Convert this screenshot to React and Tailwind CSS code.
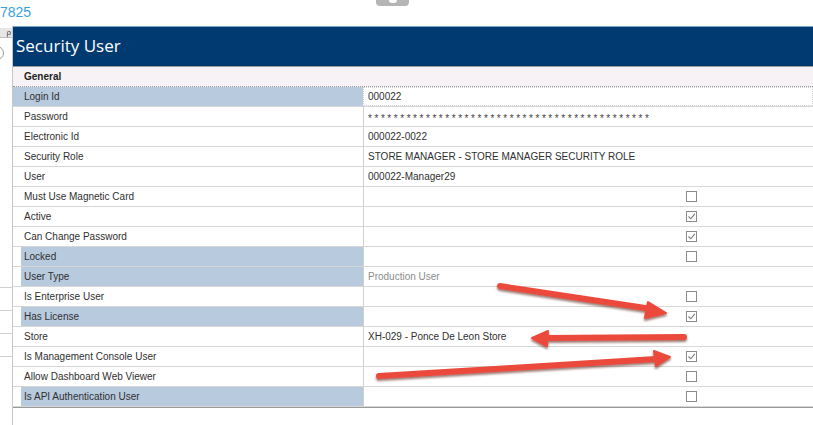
import React from "react";

const rows = [
  { label: "Login Id", value: "000022", hl: true, full: true, focus: true },
  { label: "Password", value: "*".repeat(44), pw: true },
  { label: "Electronic Id", value: "000022-0022" },
  { label: "Security Role", value: "STORE MANAGER - STORE MANAGER SECURITY ROLE" },
  { label: "User", value: "000022-Manager29" },
  { label: "Must Use Magnetic Card", check: false },
  { label: "Active", check: true },
  { label: "Can Change Password", check: true },
  { label: "Locked", check: false, hl: true },
  { label: "User Type", value: "Production User", muted: true, hl: true },
  { label: "Is Enterprise User", check: false },
  { label: "Has License", check: true, hl: true },
  { label: "Store", value: "XH-029 - Ponce De Leon Store" },
  { label: "Is Management Console User", check: true },
  { label: "Allow Dashboard Web Viewer", check: false },
  { label: "Is API Authentication User", check: false, hl: true },
];

const Box = ({ checked }) => (
  <span className="w-[11px] h-[11px] border border-[#8a8a8a] bg-white flex items-center justify-center">
    {checked && (
      <svg width="9" height="9" viewBox="0 0 9 9">
        <path d="M1.5 4.5 L3.8 6.8 L7.8 1.8" fill="none" stroke="#7a7a7a" strokeWidth="1.1" />
      </svg>
    )}
  </span>
);

const Row = ({ r }) => (
  <div className="flex h-[20px] border-b border-[#d6d6d6]">
    <div className={`w-[350px] flex ${r.full ? "" : "pl-[8px]"}`}>
      <div className={`flex-1 flex items-center ${r.full ? "pl-[11px]" : "pl-[3px]"} ${r.hl ? "bg-[#b8cade]" : ""}`}>
        {r.label}
      </div>
    </div>
    <div
      className={`flex-1 flex items-center pl-[4px] border-l border-[#d0d0d0] ${
        r.focus ? "border border-dotted border-[#707070]" : ""
      }`}
    >
      {r.check !== undefined ? (
        <div className="w-[329px] flex justify-end">
          <Box checked={r.check} />
        </div>
      ) : (
        <span
          className={`${r.muted ? "text-[#8c8c8c]" : ""} ${r.pw ? "tracking-[2.55px] text-[#444] relative top-[2px]" : ""}`}
        >
          {r.value}
        </span>
      )}
    </div>
  </div>
);

export default function App() {
  return (
    <div className="w-[813px] h-[425px] overflow-hidden bg-white relative font-['Liberation_Sans',Arial,sans-serif]">
      <div className="h-[26px] pt-[2px] text-[14px] text-[#3a9fe0]">7825</div>
      <div className="absolute left-[376px] top-0 w-[33px] h-[6px] bg-[#b5b5b5] rounded-b-[4px] flex justify-center">
        <div className="w-[8px] h-[3px] bg-white rounded-b-[3px]" />
      </div>
      <div className="flex h-[399px]">
        <div className="w-[12px] flex flex-col">
          <div className="h-[2px]" />
          <div className="h-[10px] bg-[#e6e6e6] border-b border-[#bdbdbd] text-[8px] leading-[10px] text-[#444] text-right pr-[1px]">
            ρ
          </div>
          <div className="h-[8px]" />
          <div className="w-[14px] h-[14px] ml-[-10px] rounded-full border border-[#9a9a9a]" />
          <div className="h-[227px]" />
          <div className="h-[23px] border-t border-[#d0d0d0]" />
          <div className="h-[23px] border-t border-[#d0d0d0]" />
          <div className="h-[23px] border-t border-[#d0d0d0]" />
          <div className="h-[23px] border-t border-[#d0d0d0]" />
        </div>
        <div className="flex-1 flex flex-col border-l border-[#c8c8c8]">
          <div className="h-[40px] bg-[#003a70] border-t border-[#7aa6cf] flex items-center pl-[3px] pb-[2px] text-[17px] text-white font-['Open_Sans',sans-serif]">
            Security User
          </div>
          <div className="border-t border-[#9a9a9a] border-b w-full text-[10px] text-[#2f2f2f]">
            <div className="h-[20px] bg-[#f6f2f6] border-b border-dotted border-[#9a9a9a] flex items-center pl-[11px] font-bold text-[#222]">
              General
            </div>
            {rows.map((r) => (
              <Row key={r.label} r={r} />
            ))}
          </div>
        </div>
      </div>
      <svg className="absolute inset-0 pointer-events-none" width="813" height="425">
        <defs>
          <filter id="sh" x="-10%" y="-50%" width="120%" height="200%">
            <feDropShadow dx="0" dy="2" stdDeviation="1.2" floodColor="#5a1a10" floodOpacity="0.6" />
          </filter>
        </defs>
        <g filter="url(#sh)" fill="#ec4a3c" stroke="#ec4a3c" strokeLinecap="round" strokeLinejoin="round">
          <line x1="500" y1="286" x2="652" y2="309" strokeWidth="6" />
          <polygon points="666,313 648,302 645,318" strokeWidth="2" />
          <line x1="684" y1="337" x2="544" y2="338" strokeWidth="6" />
          <polygon points="532,338 548,331 547,346" strokeWidth="2" />
          <line x1="379" y1="376" x2="656" y2="359" strokeWidth="6" />
          <polygon points="670,357 654,351 656,366" strokeWidth="2" />
        </g>
      </svg>
    </div>
  );
}
